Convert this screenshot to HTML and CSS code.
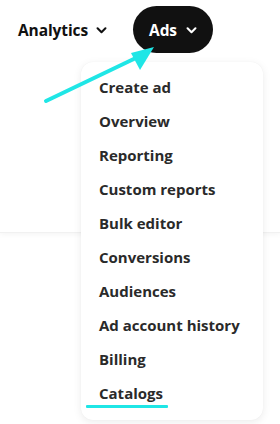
FILE: index.html
```html
<!DOCTYPE html>
<html>
<head>
<meta charset="utf-8">
<link rel="stylesheet" href="styles.css">
</head>
<body>
<div class="page">
  <header class="header">
    <nav class="nav">
      <div class="nav-item">
        <span>Analytics</span>
        <svg class="chev" viewBox="0 0 12 8" width="11" height="7"><path d="M1.5 1.5 L6 6 L10.5 1.5" fill="none" stroke="currentColor" stroke-width="2.3" stroke-linecap="round" stroke-linejoin="round"/></svg>
      </div>
      <div class="nav-item pill">
        <span>Ads</span>
        <svg class="chev" viewBox="0 0 12 8" width="11" height="7"><path d="M1.5 1.5 L6 6 L10.5 1.5" fill="none" stroke="currentColor" stroke-width="2.3" stroke-linecap="round" stroke-linejoin="round"/></svg>
      </div>
    </nav>
  </header>
  <ul class="menu">
    <li>Create ad</li>
    <li>Overview</li>
    <li>Reporting</li>
    <li>Custom reports</li>
    <li>Bulk editor</li>
    <li>Conversions</li>
    <li>Audiences</li>
    <li>Ad account history</li>
    <li>Billing</li>
    <li class="marked">Catalogs<span class="mark"></span></li>
  </ul>
  <svg class="arrow" width="280" height="120" viewBox="0 0 280 120">
    <line x1="46" y1="101" x2="140" y2="56" stroke="#1fe6e6" stroke-width="4" stroke-linecap="round"/>
    <polygon points="154,47 131,53 140,70" fill="#1fe6e6"/>
  </svg>
</div>
</body>
</html>
```
FILE: styles.css
```css
* { box-sizing: border-box; }
html, body { margin: 0; padding: 0; background: #fff; }
body { font-family: "Open Sans", "DejaVu Sans", sans-serif; }
.page { position: relative; width: 280px; height: 424px; overflow: hidden; }
.header {
  height: 233px;
  background: #fff;
  box-shadow: 0 1px 6px rgba(0,0,0,0.05);
  border-bottom: 1px solid #f1f1f1;
}
.nav { display: flex; align-items: center; padding: 6px 0 0 18px; gap: 26px; }
.nav-item {
  display: flex; align-items: center; gap: 8px;
  font-size: 15.5px; font-weight: 700; color: #111; letter-spacing: -0.1px;
  height: 47px;
}
.pill {
  background: #111; color: #fff; border-radius: 24px;
  padding: 0 16px; width: 80px;
  justify-content: space-between;
}
.chev { display: block; margin-top: 1px; }
.menu {
  position: absolute; left: 81px; top: 62px; width: 182px; height: 358px;
  margin: 0; padding: 8px 0 9px 18px; list-style: none;
  background: #fff; border-radius: 12px;
  box-shadow: 0 2px 8px rgba(0,0,0,0.08), 0 0 1px rgba(0,0,0,0.06);
}
.menu li {
  height: 34px; display: flex; align-items: center;
  font-size: 15px; font-weight: 700; color: #2a2a2a; position: relative;
}
.mark {
  position: absolute; left: -13px; width: 82px; height: 3px; top: 29px;
  background: #1fe6e6; border-radius: 1px;
}
.arrow { position: absolute; left: 0; top: 0; }
```
